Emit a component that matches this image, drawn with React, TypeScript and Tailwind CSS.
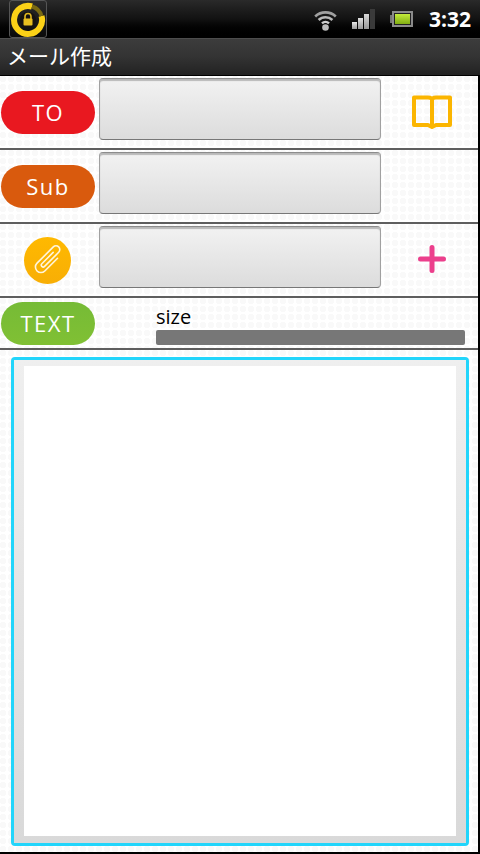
import React from 'react';

const dots =
  'bg-white bg-[radial-gradient(circle,#f9f9f9_3px,transparent_3.5px)] bg-[length:8px_8px] bg-[position:-1px_-1px]';

const AppIcon = () => (
  <div className="w-[38px] h-[38px] ml-[9px] rounded-[3px] border border-[#555] bg-gradient-to-b from-[#2c2c2c] to-[#0a0a0a] flex items-center justify-center">
    <svg width="36" height="36" viewBox="0 0 36 36">
      <path d="M22 5.5 A14 14 0 1 0 31.5 15" fill="none" stroke="#fbd117" strokeWidth="6" />
      <path d="M22 5.5 A14 14 0 0 1 31.5 15" fill="none" stroke="#7a6a12" strokeWidth="4" />
      <circle cx="18" cy="19" r="8" fill="#161310" />
      <path d="M15 18 v-2.5 a3 3 0 0 1 6 0 V18" fill="none" stroke="#e0b820" strokeWidth="1.6" />
      <rect x="13.5" y="17.5" width="9" height="7" rx="1" fill="#e8bf20" />
    </svg>
  </div>
);

const StatusIcons = () => (
  <div className="flex items-center mr-[9px] h-full">
    <svg width="23" height="22" viewBox="0 0 23 22" className="mr-[15px] mb-[-1px]">
      <path d="M1.2 7.5 A15 15 0 0 1 21.8 7.5" fill="none" stroke="#a0a0a0" strokeWidth="2.6" />
      <path d="M4.6 11 A10 10 0 0 1 18.4 11" fill="none" stroke="#b8b8b8" strokeWidth="2.6" />
      <path d="M8 14.4 A5 5 0 0 1 15 14.4" fill="none" stroke="#cfcfcf" strokeWidth="2.4" />
      <circle cx="11.5" cy="18.5" r="3.3" fill="#bcbcbc" />
    </svg>
    <div className="flex items-end gap-px h-[20px] mr-[15px]">
      <div className="w-[5px] h-[7px] bg-gradient-to-b from-[#e8e8e8] to-[#999]" />
      <div className="w-[5px] h-[11px] bg-gradient-to-b from-[#e0e0e0] to-[#999]" />
      <div className="w-[5px] h-[15px] bg-gradient-to-b from-[#d8d8d8] to-[#999]" />
      <div className="w-[5px] h-[20px] bg-[#3a3a3a]" />
    </div>
    <div className="flex items-center mr-[16px]">
      <div className="w-[2px] h-[8px] bg-[#777]" />
      <div className="w-[21px] h-[16px] border-[2px] border-[#8b8b8b] bg-[#222] p-px">
        <div className="w-full h-full bg-gradient-to-b from-[#c4ec3a] to-[#82ae12]" />
      </div>
    </div>
    <span className="font-['Open_Sans',sans-serif] font-bold text-[21px] leading-none text-white">3:32</span>
  </div>
);

const Pill = ({ label, color }: { label: string; color: string }) => (
  <div
    className={`w-[94px] h-[43px] ml-px rounded-full flex items-center justify-center text-white text-[22px] tracking-[1.5px] font-['Open_Sans',sans-serif] ${color}`}
  >
    {label}
  </div>
);

const InputBox = () => (
  <div className="w-[282px] h-[62px] ml-[4px] self-start mt-[2px] rounded-[4px] border border-[#a0a0a0] border-t-[#8c8c8c] border-b-[#777] bg-gradient-to-b from-[#f2f2f2] to-[#dcdcdc] shadow-[inset_0_2px_1px_#b8b8b8]" />
);

const Divider = () => <div className="h-[2px] bg-[#5e5e5e]" />;

const Row = ({ left, right }: { left: React.ReactNode; right?: React.ReactNode }) => (
  <div className="h-[72px] flex items-center">
    <div className="w-[95px] flex justify-center shrink-0">{left}</div>
    <InputBox />
    <div className="w-[97px] flex justify-center pl-[5px]">{right}</div>
  </div>
);

const BookIcon = () => (
  <svg width="40" height="36" viewBox="0 0 40 36">
    <path
      d="M2 3.5 H16 Q20 3.5 20 6 Q20 3.5 24 3.5 H38 V31 H24 L20 33 L16 31 H2 Z M20 6 V31"
      fill="none"
      stroke="#fbb500"
      strokeWidth="4"
      strokeLinejoin="round"
    />
  </svg>
);

const ClipButton = () => (
  <div className="w-[47px] h-[47px] rounded-full bg-gradient-to-b from-[#ffb900] to-[#f8ae05] flex items-center justify-center">
    <svg width="32" height="32" viewBox="0 0 32 32">
      <g transform="rotate(45 16 16)">
        <path
          d="M21.5 8 V26 a5.5 5.5 0 0 1 -11 0 V3 a3.8 3.8 0 0 1 7.6 0 V23 a1.9 1.9 0 0 1 -3.8 0 V7"
          fill="none"
          stroke="#fff5dc"
          strokeWidth="1.6"
          strokeLinecap="round"
        />
      </g>
    </svg>
  </div>
);

const PlusIcon = () => (
  <svg width="28" height="28" viewBox="0 0 28 28" className="mb-[2px]">
    <path d="M14 2.5 V25.5 M2.5 14 H25.5" stroke="#ec3f8c" strokeWidth="5" strokeLinecap="round" />
  </svg>
);

export default function App() {
  return (
    <div className="w-[480px] h-[854px] flex flex-col bg-black font-['Open_Sans',sans-serif]">
      <div className="h-[38px] flex items-center justify-between bg-gradient-to-b from-[#2a2a2a] via-[#121212] to-black">
        <AppIcon />
        <StatusIcons />
      </div>
      <div className="h-[37px] flex items-center pl-[7px] pb-[3px] border-t border-[#4d4d4d] bg-gradient-to-b from-[#3c3c3c] via-[#333] to-[#222] text-white text-[21px] leading-none font-['Noto_Sans_CJK_JP',sans-serif]">
        メール作成
      </div>
      <div className="h-px bg-black" />
      <div className="flex-1 flex flex-col mr-[2px] mb-[2px]">
        <div className={dots}>
          <Row left={<Pill label="TO" color="bg-[#e91820]" />} right={<BookIcon />} />
        </div>
        <Divider />
        <div className={dots}>
          <Row left={<Pill label="Sub" color="bg-[#d95a0d]" />} />
        </div>
        <Divider />
        <div className={dots}>
          <Row left={<ClipButton />} right={<PlusIcon />} />
        </div>
        <Divider />
        <div className={`h-[50px] flex items-center ${dots}`}>
          <Pill label="TEXT" color="bg-gradient-to-b from-[#76bb36] to-[#80c034]" />
          <div className="ml-[61px] w-[309px] flex flex-col pt-[3px]">
            <span className="text-black text-[20px] leading-[24px] mb-px font-['Open_Sans',sans-serif]">size</span>
            <div className="h-[15px] rounded-[2px] bg-[#777]" />
          </div>
        </div>
        <Divider />
        <div className={`flex-1 pl-[11px] pr-[9px] pt-[7px] pb-[6px] ${dots}`}>
          <div className="h-full rounded-[4px] border-[3px] border-[#22d5fb]">
            <div className="h-full pl-[10px] pr-[10px] pt-[6px] pb-[7px] bg-gradient-to-b from-[#efefef] to-[#d9d9d9]">
              <div className="h-full bg-white" />
            </div>
          </div>
        </div>
      </div>
    </div>
  );
}
